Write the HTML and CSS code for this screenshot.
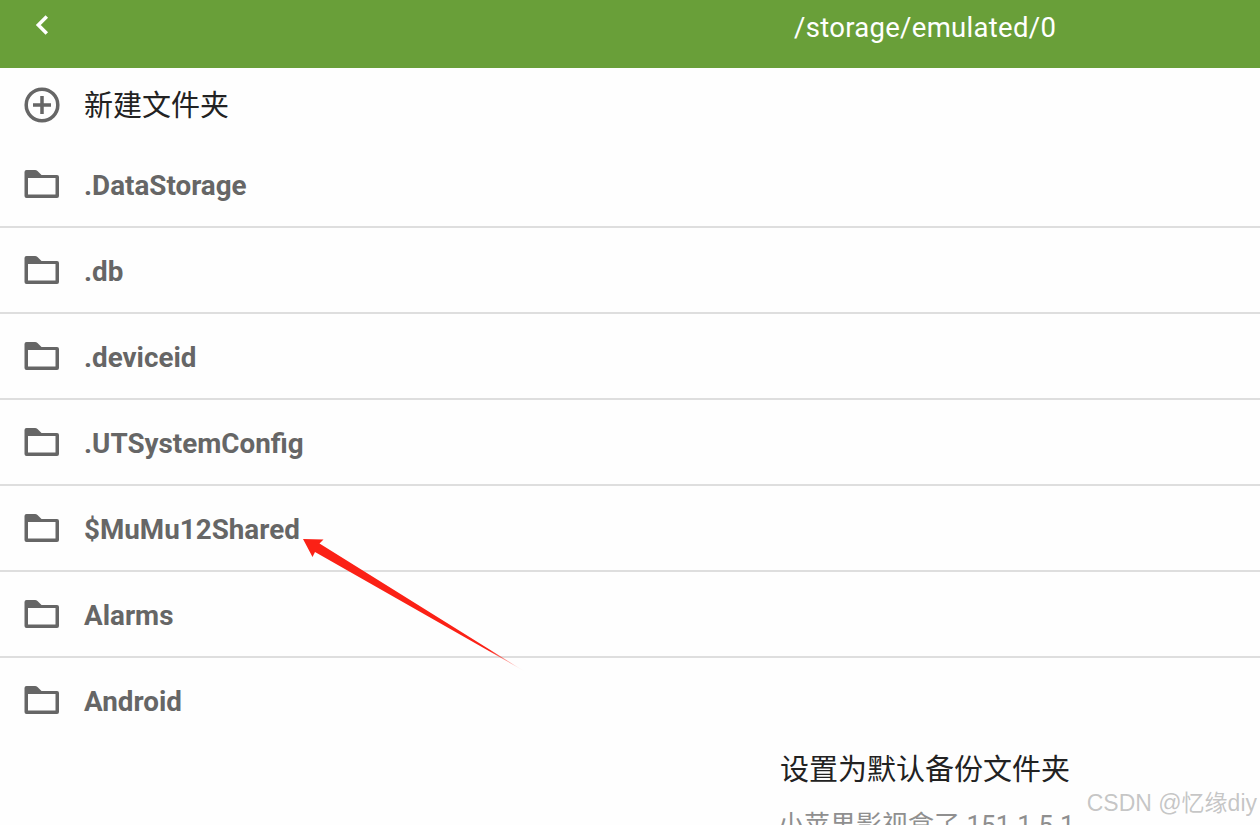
FILE: index.html
```html
<!DOCTYPE html>
<html lang="zh-CN">
<head>
<meta charset="UTF-8">
<meta name="viewport" content="width=device-width, initial-scale=1.0">
<title>/storage/emulated/0</title>
<link rel="stylesheet" href="styles.css">
</head>
<body>

<svg class="icon-defs" width="0" height="0">
  <symbol id="folderIcon" viewBox="0 0 36 28">
    <path fill="#666" fill-rule="evenodd" d="M2.500 0 H11 Q12.500 0 13.500 1 L17.500 5 H33 Q35 5 35 7 V26 Q35 28 33 28 H2.500 Q0.500 28 0.500 26 V2 Q0.500 0 2.500 0 Z M4 8 V24.500 H31.500 V8 Z"/>
  </symbol>
</svg>

<div class="container">
  <div class="header">
    <button class="back-button">
      <svg width="16" height="20" viewBox="0 0 16 20"><path d="M12.800 1.500 L4.300 10 L12.800 18.500" fill="none" stroke="#fff" stroke-width="3.500"/></svg>
    </button>
    <div class="path-title">/storage/emulated/0</div>
  </div>

  <div class="new-folder">
    <svg class="row-icon" width="36" height="36" viewBox="0 0 36 36">
      <circle cx="18" cy="18" r="15.800" fill="none" stroke="#666" stroke-width="3.500"/>
      <path d="M18 9 V27 M9 18 H27" fill="none" stroke="#666" stroke-width="3.500"/>
    </svg>
    <span>新建文件夹</span>
  </div>

  <div class="folder-list">
    <div class="folder">
      <svg class="row-icon" width="36" height="28"><use href="#folderIcon"/></svg>
      <span>.DataStorage</span>
    </div>
    <div class="folder">
      <svg class="row-icon" width="36" height="28"><use href="#folderIcon"/></svg>
      <span>.db</span>
    </div>
    <div class="folder">
      <svg class="row-icon" width="36" height="28"><use href="#folderIcon"/></svg>
      <span>.deviceid</span>
    </div>
    <div class="folder">
      <svg class="row-icon" width="36" height="28"><use href="#folderIcon"/></svg>
      <span>.UTSystemConfig</span>
    </div>
    <div class="folder">
      <svg class="row-icon" width="36" height="28"><use href="#folderIcon"/></svg>
      <span>$MuMu12Shared</span>
    </div>
    <div class="folder">
      <svg class="row-icon" width="36" height="28"><use href="#folderIcon"/></svg>
      <span>Alarms</span>
    </div>
    <div class="folder last">
      <svg class="row-icon" width="36" height="28"><use href="#folderIcon"/></svg>
      <span>Android</span>
    </div>
  </div>

  <div class="backup-panel">
    <div class="backup-title">设置为默认备份文件夹</div>
    <div class="backup-sub">小苹果影视盒了 151.1.5.1</div>
  </div>

  <!-- annotation drawn over the screenshot -->
  <svg class="arrow" width="1260" height="825" viewBox="0 0 1260 825">
    <defs>
      <linearGradient id="arrowFade" gradientUnits="userSpaceOnUse" x1="490" y1="649" x2="519" y2="667">
        <stop offset="0" stop-color="#fb2116"/>
        <stop offset="1" stop-color="#fb2116" stop-opacity="0.1"/>
      </linearGradient>
    </defs>
    <path d="M303 539 L323.500 539.500 L319.500 543.500 L524 671 L315 552 L312.500 557 Z" fill="url(#arrowFade)"/>
  </svg>
  <div class="watermark">CSDN @忆缘diy</div>
</div>

</body>
</html>
```

FILE: styles.css
```css
html, body {
  margin: 0;
  padding: 0;
  height: 100%;
  overflow: hidden;
}
body {
  font-family: Roboto, "Noto Sans CJK SC", sans-serif;
  background-color: #fefefe;
}
.icon-defs {
  display: block;
  height: 0;
}
.container {
  position: relative;
  height: 825px;
  overflow: hidden;
}
.header {
  display: flex;
  height: 68px;
  background-color: #699f39;
  color: #fff;
}
.back-button {
  width: 84px;
  height: 50px;
  padding: 0;
  border: none;
  background: none;
  display: flex;
  align-items: center;
  justify-content: center;
}
.path-title {
  margin-left: 710px;
  font-size: 27.500px;
  line-height: 56px;
  letter-spacing: 0.3px;
  white-space: nowrap;
}
.new-folder {
  display: flex;
  align-items: center;
  height: 74px;
  padding-left: 24px;
  font-size: 29px;
  line-height: 70px;
  color: #222;
}
.new-folder span {
  margin-top: 1px;
}
.row-icon {
  flex-shrink: 0;
  margin-right: 24px;
}
.new-folder .row-icon {
  margin-top: -1px;
}
.folder {
  display: flex;
  align-items: center;
  height: 84px;
  padding-left: 24px;
  border-bottom: 2px solid #dedede;
  font-size: 27.800px;
  font-weight: 700;
  color: #666;
}
.folder span {
  margin-top: 3px;
}
.folder.last {
  border-bottom: none;
}
.backup-panel {
  margin-top: 7px;
  padding-left: 780px;
}
.backup-title {
  font-size: 29px;
  line-height: 42px;
  color: #222;
}
.backup-sub {
  margin-top: 18px;
  margin-left: -2px;
  font-size: 26px;
  line-height: 32px;
  color: #8f8f8f;
  white-space: nowrap;
}
.arrow {
  position: absolute;
  left: 0;
  top: 0;
  pointer-events: none;
}
.watermark {
  position: absolute;
  right: 3px;
  top: 788px;
  font-family: "Liberation Sans", "Noto Sans CJK SC", sans-serif;
  font-size: 23px;
  line-height: 30px;
  color: rgba(150, 150, 150, 0.55);
  white-space: nowrap;
}
```
